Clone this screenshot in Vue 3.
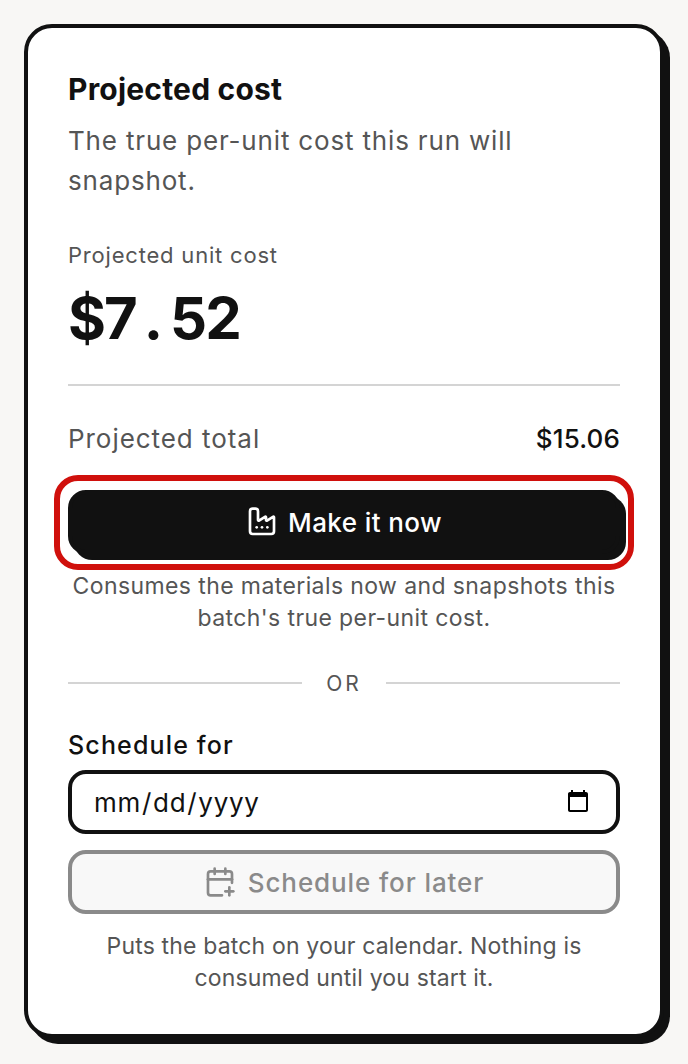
<script setup>
import { ref } from 'vue'

const date = ref('')
</script>

<template>
  <div class="page">
    <section class="card">
      <h2 class="title">Projected cost</h2>
      <p class="sub">The true per-unit cost this run will snapshot.</p>

      <div class="unit-label">Projected unit cost</div>
      <div class="unit-value">$7<span class="dot">.</span>52</div>

      <div class="total-row">
        <span class="total-label">Projected total</span>
        <span class="total-value">$15.06</span>
      </div>

      <div class="make-wrap">
        <button class="btn-make" type="button">
          <svg class="icon" viewBox="0 0 24 24" fill="none" stroke="currentColor" stroke-width="2" stroke-linecap="round" stroke-linejoin="round">
            <path d="M12 16h.01" />
            <path d="M16 16h.01" />
            <path d="M3 19a2 2 0 0 0 2 2h14a2 2 0 0 0 2-2V8.5a.5.5 0 0 0-.769-.422l-4.462 2.844A.5.5 0 0 1 15 10.5v-2a.5.5 0 0 0-.769-.422L9.77 10.922A.5.5 0 0 1 9 10.5V4a2 2 0 0 0-2-2H5a2 2 0 0 0-2 2z" />
            <path d="M8 16h.01" />
          </svg>
          Make it now
        </button>
        <div class="highlight"></div>
      </div>
      <p class="help help-make">Consumes the materials now and snapshots this batch's true per-unit cost.</p>

      <div class="or"><span>OR</span></div>

      <label class="field-label" for="sched">Schedule for</label>
      <input id="sched" v-model="date" class="date" type="date" />

      <button class="btn-later" type="button" disabled>
        <svg class="icon" viewBox="0 0 24 24" fill="none" stroke="currentColor" stroke-width="2" stroke-linecap="round" stroke-linejoin="round">
          <path d="M16 19h6" />
          <path d="M16 2v4" />
          <path d="M19 16v6" />
          <path d="M21 12.598V6a2 2 0 0 0-2-2H5a2 2 0 0 0-2 2v14a2 2 0 0 0 2 2h8.5" />
          <path d="M3 10h18" />
          <path d="M8 2v4" />
        </svg>
        Schedule for later
      </button>
      <p class="help help-later">Puts the batch on your calendar. Nothing is consumed until you start it.</p>
    </section>
  </div>
</template>

<style>
html, body {
  margin: 0;
  background: #f8f7f5;
}
</style>

<style scoped>
.page {
  padding: 24px 24px 20px;
  width: 640px;
  font-family: Inter, "Liberation Sans", sans-serif;
  color: #111;
}

.card {
  background: #fff;
  border: 4px solid #111;
  border-radius: 28px;
  box-shadow: 6px 6px 0 #111;
  padding: 43px 40px 40px;
  display: flex;
  flex-direction: column;
}

.title {
  margin: 0;
  font-size: 30px;
  line-height: 36px;
  font-weight: 700;
  letter-spacing: 0.2px;
}

.sub {
  margin: 14px 0 0;
  font-size: 26px;
  line-height: 40px;
  letter-spacing: 0.83px;
  color: #555;
}

.unit-label {
  margin-top: 38px;
  font-size: 22px;
  line-height: 32px;
  letter-spacing: 0.8px;
  color: #555;
}

.unit-value {
  margin-top: 13px;
  padding-bottom: 32px;
  border-bottom: 2px solid #d4d4d4;
  font-size: 58px;
  line-height: 68px;
  font-weight: 700;
  letter-spacing: -2px;
}

.dot {
  margin: 0 9px 0 8px;
}

.total-row {
  margin-top: 36px;
  display: flex;
  justify-content: space-between;
  align-items: center;
  line-height: 34px;
}

.total-label {
  font-size: 26px;
  letter-spacing: 0.95px;
  color: #555;
}

.total-value {
  font-size: 26px;
  font-weight: 500;
  letter-spacing: 0.15px;
}

.make-wrap {
  position: relative;
  margin-top: 34px;
}

.btn-make {
  width: 100%;
  height: 64px;
  display: flex;
  align-items: center;
  justify-content: center;
  gap: 10px;
  border: 4px solid #111;
  border-radius: 18px;
  background: #111;
  box-shadow: 6px 6px 0 #111;
  color: #fff;
  font-family: inherit;
  font-size: 26px;
  font-weight: 500;
  letter-spacing: 0.4px;
  padding: 0;
}

.highlight {
  position: absolute;
  inset: -15px -14px -16px -14px;
  border: 6px solid #d0100c;
  border-radius: 24px;
  pointer-events: none;
}

.icon {
  width: 32px;
  height: 32px;
  flex: none;
}

.help {
  margin: 0;
  font-size: 23px;
  line-height: 32px;
  text-align: center;
  color: #555;
}

.help-make {
  margin-top: 16px;
  letter-spacing: 0.4px;
}

.or {
  margin-top: 34px;
  display: flex;
  align-items: center;
  gap: 24px;
  font-size: 21px;
  line-height: 32px;
  letter-spacing: 3px;
  color: #555;
}

.or::before,
.or::after {
  content: "";
  flex: 1;
  height: 2px;
  margin-bottom: 2px;
  background: #d4d4d4;
}

.field-label {
  margin-top: 29px;
  font-size: 25px;
  line-height: 32px;
  font-weight: 500;
  letter-spacing: 1.15px;
}

.date {
  margin-top: 9px;
  box-sizing: border-box;
  width: 100%;
  height: 64px;
  padding: 0 22px 0 21px;
  border: 4px solid #111;
  border-radius: 18px;
  background: #fff;
  color: #111;
  font-family: inherit;
  font-size: 26px;
  letter-spacing: 0.7px;
}

.date::-webkit-calendar-picker-indicator {
  width: 26px;
  height: 26px;
  padding: 0;
  margin: 0 3px 0 0;
}

.btn-later {
  margin-top: 16px;
  width: 100%;
  height: 64px;
  display: flex;
  align-items: center;
  justify-content: center;
  gap: 12px;
  border: 4px solid #8a8a8a;
  border-radius: 18px;
  background: #f8f8f8;
  color: #8a8a8a;
  font-family: inherit;
  font-size: 26px;
  font-weight: 500;
  letter-spacing: 0.9px;
  padding: 0;
}

.help-later {
  margin-top: 16px;
  letter-spacing: 0.17px;
}
</style>
